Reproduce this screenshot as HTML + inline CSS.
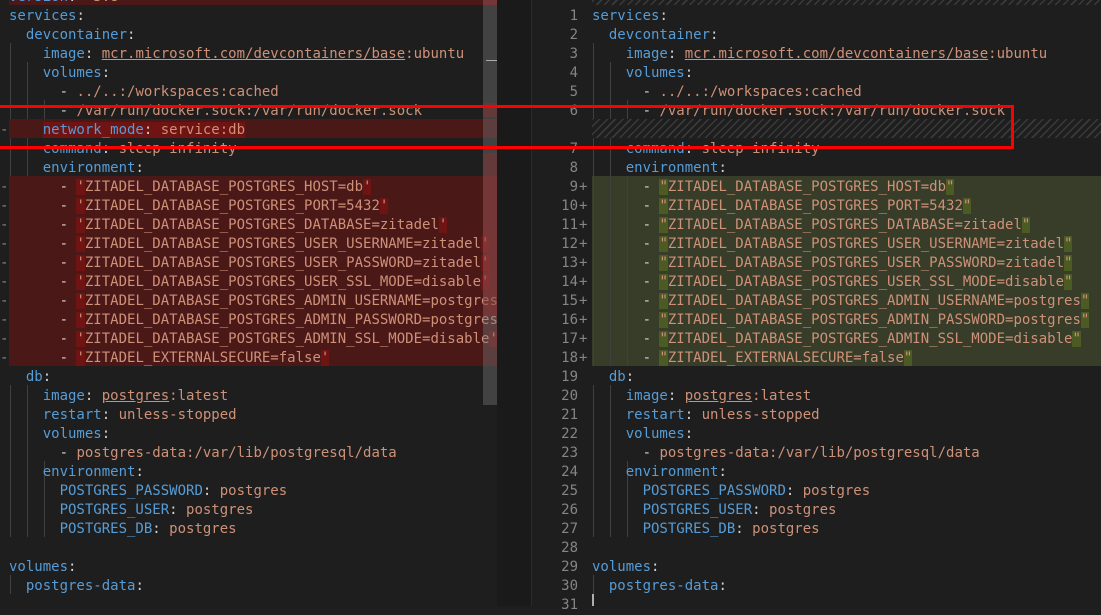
<!DOCTYPE html>
<html><head><meta charset="utf-8"><style>
*{margin:0;padding:0;box-sizing:border-box}
body{width:1101px;height:606px;background:#1e1e1e;overflow:hidden;position:relative;font-family:"DejaVu Sans Mono","Liberation Mono",monospace;font-size:14px;color:#d4d4d4}
.pane{position:absolute;top:0;height:606px;overflow:hidden}
.r{position:absolute;left:0;right:0;height:19px;line-height:19px;padding-top:2px;white-space:pre}
.k{color:#569cd6}.v{color:#ce9178}
.u{text-decoration:underline;text-decoration-color:#ce9178}
.del{background:#4b1818}
.add{background:#373d29}
.dh{background:#6f1313}
.ah{background:#4b5b23}
.hatch{background:repeating-linear-gradient(-45deg,#1e1e1e 0,#1e1e1e 4px,#3a3a3a 4px,#3a3a3a 5.5px)}
.g{position:absolute;width:1px;background:#404040}
.ln{position:absolute;left:532px;width:46px;text-align:right;color:#858585;height:19px;line-height:19px;padding-top:2px}
.pl{position:absolute;left:579px;color:#858585;height:19px;line-height:19px;padding-top:2px}
.gm{position:absolute;left:0;color:#858585;height:19px;line-height:19px;padding-top:2px}
</style></head><body>

<div class="pane" style="left:0;width:497px">
<div class="g" style="left:10px;top:43px;height:304px"></div>
<div class="g" style="left:27px;top:62px;height:304px"></div>
<div class="g" style="left:44px;top:100px;height:38px"></div>
<div class="g" style="left:44px;top:176px;height:190px"></div>
<div class="g" style="left:10px;top:385px;height:152px"></div>
<div class="g" style="left:27px;top:385px;height:152px"></div>
<div class="g" style="left:44px;top:461px;height:19px"></div>
<div class="g" style="left:44px;top:480px;height:57px"></div>
<div class="g" style="left:10px;top:575px;height:19px"></div>

<div class="r del" style="top:-14px;left:9px"><span class="k">version</span>: <span class="v">'3.8'</span></div>
<div class="r" style="top:5px;padding-left:9px"><span class="k">services</span>:</div>
<div class="r" style="top:24px;padding-left:9px">  <span class="k">devcontainer</span>:</div>
<div class="r" style="top:43px;padding-left:9px">    <span class="k">image</span>: <span class="v u">mcr.microsoft.com/devcontainers/base</span><span class="v">:ubuntu</span></div>
<div class="r" style="top:62px;padding-left:9px">    <span class="k">volumes</span>:</div>
<div class="r" style="top:81px;padding-left:9px">      - <span class="v">../..:/workspaces:cached</span></div>
<div class="r" style="top:100px;padding-left:9px">      - <span class="v">/var/run/docker.sock:/var/run/docker.sock</span></div>
<div class="r del" style="top:119px;left:9px">    <span class="dh"><span class="k">network_mode</span>: <span class="v">service:db</span></span></div>
<div class="r" style="top:138px;padding-left:9px">    <span class="k">command</span>: <span class="v">sleep infinity</span></div>
<div class="r" style="top:157px;padding-left:9px">    <span class="k">environment</span>:</div>
<div class="r del" style="top:176px;left:9px">      - <span class="v"><span class="dh">'</span>ZITADEL_DATABASE_POSTGRES_HOST=db<span class="dh">'</span></span></div>
<div class="r del" style="top:195px;left:9px">      - <span class="v"><span class="dh">'</span>ZITADEL_DATABASE_POSTGRES_PORT=5432<span class="dh">'</span></span></div>
<div class="r del" style="top:214px;left:9px">      - <span class="v"><span class="dh">'</span>ZITADEL_DATABASE_POSTGRES_DATABASE=zitadel<span class="dh">'</span></span></div>
<div class="r del" style="top:233px;left:9px">      - <span class="v"><span class="dh">'</span>ZITADEL_DATABASE_POSTGRES_USER_USERNAME=zitadel<span class="dh">'</span></span></div>
<div class="r del" style="top:252px;left:9px">      - <span class="v"><span class="dh">'</span>ZITADEL_DATABASE_POSTGRES_USER_PASSWORD=zitadel<span class="dh">'</span></span></div>
<div class="r del" style="top:271px;left:9px">      - <span class="v"><span class="dh">'</span>ZITADEL_DATABASE_POSTGRES_USER_SSL_MODE=disable<span class="dh">'</span></span></div>
<div class="r del" style="top:290px;left:9px">      - <span class="v"><span class="dh">'</span>ZITADEL_DATABASE_POSTGRES_ADMIN_USERNAME=postgres<span class="dh">'</span></span></div>
<div class="r del" style="top:309px;left:9px">      - <span class="v"><span class="dh">'</span>ZITADEL_DATABASE_POSTGRES_ADMIN_PASSWORD=postgres<span class="dh">'</span></span></div>
<div class="r del" style="top:328px;left:9px">      - <span class="v"><span class="dh">'</span>ZITADEL_DATABASE_POSTGRES_ADMIN_SSL_MODE=disable<span class="dh">'</span></span></div>
<div class="r del" style="top:347px;left:9px">      - <span class="v"><span class="dh">'</span>ZITADEL_EXTERNALSECURE=false<span class="dh">'</span></span></div>
<div class="r" style="top:366px;padding-left:9px">  <span class="k">db</span>:</div>
<div class="r" style="top:385px;padding-left:9px">    <span class="k">image</span>: <span class="v u">postgres</span><span class="v">:latest</span></div>
<div class="r" style="top:404px;padding-left:9px">    <span class="k">restart</span>: <span class="v">unless-stopped</span></div>
<div class="r" style="top:423px;padding-left:9px">    <span class="k">volumes</span>:</div>
<div class="r" style="top:442px;padding-left:9px">      - <span class="v">postgres-data:/var/lib/postgresql/data</span></div>
<div class="r" style="top:461px;padding-left:9px">    <span class="k">environment</span>:</div>
<div class="r" style="top:480px;padding-left:9px">      <span class="k">POSTGRES_PASSWORD</span>: <span class="v">postgres</span></div>
<div class="r" style="top:499px;padding-left:9px">      <span class="k">POSTGRES_USER</span>: <span class="v">postgres</span></div>
<div class="r" style="top:518px;padding-left:9px">      <span class="k">POSTGRES_DB</span>: <span class="v">postgres</span></div>
<div class="r" style="top:556px;padding-left:9px"><span class="k">volumes</span>:</div>
<div class="r" style="top:575px;padding-left:9px">  <span class="k">postgres-data</span>:</div>

<div class="gm" style="top:119px">-</div>
<div class="gm" style="top:176px">-</div><div class="gm" style="top:195px">-</div><div class="gm" style="top:214px">-</div><div class="gm" style="top:233px">-</div><div class="gm" style="top:252px">-</div><div class="gm" style="top:271px">-</div><div class="gm" style="top:290px">-</div><div class="gm" style="top:309px">-</div><div class="gm" style="top:328px">-</div><div class="gm" style="top:347px">-</div>
</div>

<div style="position:absolute;left:483px;top:0;width:14px;height:405px;background:rgba(121,121,121,0.4)"></div>
<div style="position:absolute;left:483px;top:0;width:14px;height:5px;background:rgba(160,40,40,0.35)"></div>
<div style="position:absolute;left:483px;top:103px;width:14px;height:14px;background:rgba(160,40,40,0.35)"></div>
<div style="position:absolute;left:483px;top:153px;width:14px;height:163px;background:rgba(160,40,40,0.35)"></div>
<div style="position:absolute;left:486px;top:60px;width:11px;height:1px;background:#aaa"></div>
<div style="position:absolute;left:497px;top:0;width:35px;height:606px;background:#1a1a1a"></div>
<div style="position:absolute;left:531px;top:0;width:1px;height:606px;background:#2b2b2b"></div>

<div class="pane" style="left:532px;width:569px">
<div class="hatch" style="position:absolute;top:-14px;left:60px;right:0;height:19px"></div>
<div class="hatch" style="position:absolute;top:119px;left:60px;right:0;height:19px"></div>
<div class="add" style="position:absolute;top:176px;left:60px;right:0;height:190px"></div>
</div>
<div class="pane" style="left:0;width:1101px">
<div class="g" style="left:593px;top:43px;height:76px"></div>
<div class="g" style="left:593px;top:138px;height:228px"></div>
<div class="g" style="left:610px;top:62px;height:57px"></div>
<div class="g" style="left:610px;top:138px;height:228px"></div>
<div class="g" style="left:627px;top:100px;height:19px"></div>
<div class="g" style="left:627px;top:176px;height:190px"></div>
<div class="g" style="left:593px;top:385px;height:152px"></div>
<div class="g" style="left:610px;top:385px;height:152px"></div>
<div class="g" style="left:627px;top:461px;height:19px"></div>
<div class="g" style="left:627px;top:480px;height:57px"></div>
<div class="g" style="left:593px;top:575px;height:19px"></div>
<div style="position:absolute;left:592px;top:594px;width:2px;height:19px;background:#aeafad"></div>
</div>
<div class="pane" style="left:592px;width:509px">
<div class="r" style="top:5px"><span class="k">services</span>:</div>
<div class="r" style="top:24px">  <span class="k">devcontainer</span>:</div>
<div class="r" style="top:43px">    <span class="k">image</span>: <span class="v u">mcr.microsoft.com/devcontainers/base</span><span class="v">:ubuntu</span></div>
<div class="r" style="top:62px">    <span class="k">volumes</span>:</div>
<div class="r" style="top:81px">      - <span class="v">../..:/workspaces:cached</span></div>
<div class="r" style="top:100px">      - <span class="v">/var/run/docker.sock:/var/run/docker.sock</span></div>
<div class="r" style="top:138px">    <span class="k">command</span>: <span class="v">sleep infinity</span></div>
<div class="r" style="top:157px">    <span class="k">environment</span>:</div>
<div class="r" style="top:176px">      - <span class="v"><span class="ah">"</span>ZITADEL_DATABASE_POSTGRES_HOST=db<span class="ah">"</span></span></div>
<div class="r" style="top:195px">      - <span class="v"><span class="ah">"</span>ZITADEL_DATABASE_POSTGRES_PORT=5432<span class="ah">"</span></span></div>
<div class="r" style="top:214px">      - <span class="v"><span class="ah">"</span>ZITADEL_DATABASE_POSTGRES_DATABASE=zitadel<span class="ah">"</span></span></div>
<div class="r" style="top:233px">      - <span class="v"><span class="ah">"</span>ZITADEL_DATABASE_POSTGRES_USER_USERNAME=zitadel<span class="ah">"</span></span></div>
<div class="r" style="top:252px">      - <span class="v"><span class="ah">"</span>ZITADEL_DATABASE_POSTGRES_USER_PASSWORD=zitadel<span class="ah">"</span></span></div>
<div class="r" style="top:271px">      - <span class="v"><span class="ah">"</span>ZITADEL_DATABASE_POSTGRES_USER_SSL_MODE=disable<span class="ah">"</span></span></div>
<div class="r" style="top:290px">      - <span class="v"><span class="ah">"</span>ZITADEL_DATABASE_POSTGRES_ADMIN_USERNAME=postgres<span class="ah">"</span></span></div>
<div class="r" style="top:309px">      - <span class="v"><span class="ah">"</span>ZITADEL_DATABASE_POSTGRES_ADMIN_PASSWORD=postgres<span class="ah">"</span></span></div>
<div class="r" style="top:328px">      - <span class="v"><span class="ah">"</span>ZITADEL_DATABASE_POSTGRES_ADMIN_SSL_MODE=disable<span class="ah">"</span></span></div>
<div class="r" style="top:347px">      - <span class="v"><span class="ah">"</span>ZITADEL_EXTERNALSECURE=false<span class="ah">"</span></span></div>
<div class="r" style="top:366px">  <span class="k">db</span>:</div>
<div class="r" style="top:385px">    <span class="k">image</span>: <span class="v u">postgres</span><span class="v">:latest</span></div>
<div class="r" style="top:404px">    <span class="k">restart</span>: <span class="v">unless-stopped</span></div>
<div class="r" style="top:423px">    <span class="k">volumes</span>:</div>
<div class="r" style="top:442px">      - <span class="v">postgres-data:/var/lib/postgresql/data</span></div>
<div class="r" style="top:461px">    <span class="k">environment</span>:</div>
<div class="r" style="top:480px">      <span class="k">POSTGRES_PASSWORD</span>: <span class="v">postgres</span></div>
<div class="r" style="top:499px">      <span class="k">POSTGRES_USER</span>: <span class="v">postgres</span></div>
<div class="r" style="top:518px">      <span class="k">POSTGRES_DB</span>: <span class="v">postgres</span></div>
<div class="r" style="top:556px"><span class="k">volumes</span>:</div>
<div class="r" style="top:575px">  <span class="k">postgres-data</span>:</div>
</div>

<div class="ln" style="top:5px">1</div><div class="ln" style="top:24px">2</div><div class="ln" style="top:43px">3</div><div class="ln" style="top:62px">4</div><div class="ln" style="top:81px">5</div><div class="ln" style="top:100px">6</div>
<div class="ln" style="top:138px">7</div><div class="ln" style="top:157px">8</div>
<div class="ln" style="top:176px">9</div><div class="ln" style="top:195px">10</div><div class="ln" style="top:214px">11</div><div class="ln" style="top:233px">12</div><div class="ln" style="top:252px">13</div><div class="ln" style="top:271px">14</div><div class="ln" style="top:290px">15</div><div class="ln" style="top:309px">16</div><div class="ln" style="top:328px">17</div><div class="ln" style="top:347px">18</div>
<div class="pl" style="top:176px">+</div><div class="pl" style="top:195px">+</div><div class="pl" style="top:214px">+</div><div class="pl" style="top:233px">+</div><div class="pl" style="top:252px">+</div><div class="pl" style="top:271px">+</div><div class="pl" style="top:290px">+</div><div class="pl" style="top:309px">+</div><div class="pl" style="top:328px">+</div><div class="pl" style="top:347px">+</div>
<div class="ln" style="top:366px">19</div><div class="ln" style="top:385px">20</div><div class="ln" style="top:404px">21</div><div class="ln" style="top:423px">22</div><div class="ln" style="top:442px">23</div><div class="ln" style="top:461px">24</div><div class="ln" style="top:480px">25</div><div class="ln" style="top:499px">26</div><div class="ln" style="top:518px">27</div><div class="ln" style="top:537px">28</div><div class="ln" style="top:556px">29</div><div class="ln" style="top:575px">30</div><div class="ln" style="top:594px">31</div>

<div style="position:absolute;left:-10px;top:105px;width:1024px;height:44px;border:3px solid #ff0000"></div>
</body></html>
